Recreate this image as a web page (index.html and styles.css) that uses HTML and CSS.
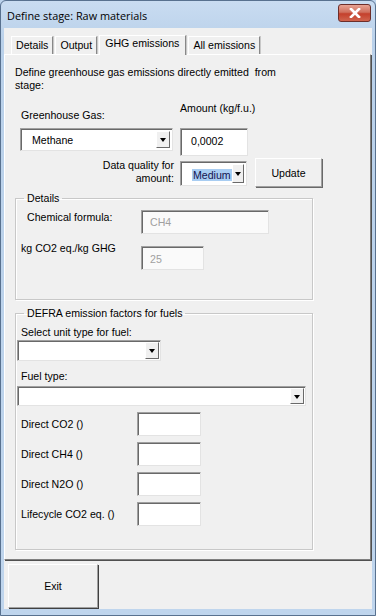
FILE: index.html
```html
<!DOCTYPE html>
<html lang="en">
<head>
  <meta charset="UTF-8">
  <title>Define stage: Raw materials</title>
  <link rel="stylesheet" href="styles.css">
</head>
<body>
  <div class="window">
    <div class="titlebar">
      <span class="title">Define stage: Raw materials</span>
      <button class="close-btn" aria-label="Close">
        <svg width="14" height="10" viewBox="0 0 14 10">
          <path d="M3 1 L11 9 M11 1 L3 9" stroke="#fff" stroke-width="2.6" stroke-linecap="square"/>
        </svg>
      </button>
    </div>

    <div class="client">
      <div class="tabs">
        <div class="tab">Details</div>
        <div class="tab">Output</div>
        <div class="tab active">GHG emissions</div>
        <div class="tab">All emissions</div>
      </div>

      <div class="tab-page">
        <p class="intro">Define greenhouse gas emissions directly emitted &nbsp;from<br>stage:</p>

        <div class="ghg-grid">
          <label class="lbl lbl-gas">Greenhouse Gas:</label>
          <label class="lbl lbl-amount">Amount (kg/f.u.)</label>
          <span></span>

          <div class="combo combo-gas">
            <span class="combo-text">Methane</span>
            <span class="drop-btn"></span>
          </div>
          <div class="textbox amount-box">0,0002</div>
          <span></span>

          <label class="lbl lbl-quality">Data quality for<br>amount:</label>
          <div class="combo combo-quality">
            <span class="combo-text"><span class="selected">Medium</span></span>
            <span class="drop-btn"></span>
          </div>
          <button class="btn btn-update">Update</button>
        </div>

        <fieldset class="group group-details">
          <legend>Details</legend>
          <div class="details-grid">
            <span class="lbl formula-lbl">Chemical formula:</span>
            <div class="textbox disabled formula-box">CH4</div>
            <span class="lbl gwp-lbl">kg CO2 eq./kg GHG</span>
            <div class="textbox disabled gwp-box">25</div>
          </div>
        </fieldset>

        <fieldset class="group group-defra">
          <legend>DEFRA emission factors for fuels</legend>
          <div class="lbl defra-lbl">Select unit type for fuel:</div>
          <div class="combo combo-unit">
            <span class="combo-text"></span>
            <span class="drop-btn"></span>
          </div>
          <div class="lbl defra-lbl fuel-lbl">Fuel type:</div>
          <div class="combo combo-fuel">
            <span class="combo-text"></span>
            <span class="drop-btn"></span>
          </div>

          <div class="factor-grid">
            <span class="lbl">Direct CO2 ()</span>
            <div class="textbox factor-box"></div>
            <span class="lbl">Direct CH4 ()</span>
            <div class="textbox factor-box"></div>
            <span class="lbl">Direct N2O ()</span>
            <div class="textbox factor-box"></div>
            <span class="lbl">Lifecycle CO2 eq. ()</span>
            <div class="textbox factor-box"></div>
          </div>
        </fieldset>
      </div>

      <div class="footer">
        <button class="btn btn-exit">Exit</button>
      </div>
    </div>
  </div>
</body>
</html>
```

FILE: styles.css
```css
body {
  margin: 0;
  padding: 0;
  background: #bcd3ec;
  font-family: "Liberation Sans", Arial, sans-serif;
  font-size: 10.6px;
  color: #000;
}
.window {
  width: 374px;
  height: 614px;
  border: 1px solid #58718f;
  border-radius: 6px 6px 0 0;
  background: linear-gradient(#c9dcf1, #bad1ea 40px, #bfd5ed);
  display: flex;
  flex-direction: column;
}
.titlebar {
  height: 27px;
  display: flex;
  align-items: center;
  justify-content: space-between;
  padding: 0 4px 0 6px;
}
.title {
  font-family: "Open Sans", "Liberation Sans", sans-serif;
  font-size: 10.9px;
  color: #000;
  margin-top: 1px;
}
.close-btn {
  width: 33px;
  height: 18px;
  margin-top: -4px;
  border: 1px solid #6d2e2a;
  border-radius: 3px;
  background: linear-gradient(#e8a393, #d0705e 45%, #c4402c 55%, #d0644e);
  display: flex;
  align-items: center;
  justify-content: center;
  padding: 0;
}
.client {
  flex: 1;
  margin: 0 3px 6px 3px;
  background: #f0f0f0;
  display: flex;
  flex-direction: column;
}

/* Tabs */
.tabs {
  height: 26px;
  display: flex;
  align-items: flex-end;
  padding-left: 7px;
}
.tab {
  height: 16px;
  padding: 1px 4px 0 4px;
  border-left: 1px solid #fff;
  border-top: 1px solid #fff;
  border-right: 1px solid #888;
  box-shadow: 1px 0 0 #c8c8c8;
  margin-right: 2px;
  line-height: 15px;
  color: #000;
}
.tab.active {
  height: 19px;
  padding: 0 6px 0 5px;
  margin: 0 2px 0 0;
  line-height: 14px;
  background: #f0f0f0;
  position: relative;
  top: 1px;
}
.tab-page {
  height: 504px;
  border-top: 1px solid #fff;
  border-left: 1px solid #fff;
  border-right: 1px solid #808080;
  border-bottom: 1px solid #808080;
  box-shadow: 1px 1px 0 #505050;
  margin-right: 1px;
}
.intro {
  margin: 11px 0 0 10px;
  line-height: 13px;
}
.lbl {
  line-height: 13px;
  white-space: nowrap;
}

/* top section */
.ghg-grid {
  display: grid;
  grid-template-columns: 153px 68px 67px;
  grid-template-rows: 27px 28px 31px;
  column-gap: 7px;
  row-gap: 2px;
  margin: 7px 0 0 15px;
}
.lbl-gas {
  align-self: end;
  margin: 0 0 4px 1px;
}
.lbl-amount {
  align-self: end;
  margin-bottom: 11px;
}
.lbl-quality {
  text-align: right;
  padding-top: 1px;
  margin-right: -1px;
}
.textbox {
  background: #fff;
  border-top: 1px solid #a0a0a0;
  border-left: 1px solid #a0a0a0;
  border-right: 1px solid #e3e3e3;
  border-bottom: 1px solid #e3e3e3;
  box-shadow: inset 1px 1px 0 #696969;
  box-sizing: border-box;
  padding: 3px 0 0 8px;
  line-height: 13px;
}
.textbox.disabled {
  color: #a0a0a0;
  background: #fafafa;
}
.amount-box {
  padding: 6px 0 0 10px;
}
.combo {
  display: flex;
  background: #fff;
  border-top: 1px solid #a0a0a0;
  border-left: 1px solid #a0a0a0;
  border-right: 1px solid #e3e3e3;
  border-bottom: 1px solid #e3e3e3;
  box-shadow: inset 1px 1px 0 #696969;
  box-sizing: border-box;
  padding: 2px;
}
.combo-text {
  flex: 1;
  line-height: 13px;
}
.drop-btn {
  width: 14px;
  background: #f0f0f0;
  border-top: 1px solid #fff;
  border-left: 1px solid #fff;
  border-right: 1px solid #696969;
  border-bottom: 1px solid #696969;
  box-sizing: border-box;
  display: flex;
  align-items: center;
  justify-content: center;
}
.drop-btn::after {
  content: "";
  border-left: 3.5px solid transparent;
  border-right: 3.5px solid transparent;
  border-top: 4px solid #000;
  margin-top: 1px;
}
.combo-gas {
  height: 23px;
  width: 153px;
}
.combo-gas .combo-text {
  padding: 3px 0 0 9px;
}
.combo-quality {
  height: 25px;
  width: 67px;
  margin-top: 3px;
}
.combo-quality .combo-text {
  padding: 5px 0 0 9px;
}
.selected {
  background: #a8cdf2;
  color: #141450;
  padding: 0 1px;
}
.btn {
  font-family: inherit;
  font-size: 10.6px;
  background: #f0f0f0;
  border-top: 1px solid #fff;
  border-left: 1px solid #fff;
  border-right: 1px solid #a0a0a0;
  border-bottom: 1px solid #a0a0a0;
  box-shadow: 1px 1px 0 #696969;
  color: #000;
  padding: 0;
}
.btn-update {
  height: 29px;
  width: 67px;
}

/* group boxes */
.group {
  width: 298px;
  margin: 0 0 0 10px;
  border: 1px solid #c8c8c8;
  box-shadow: 1px 1px 0 #fff, inset 1px 1px 0 #fff;
  padding: 0;
  box-sizing: border-box;
}
.group legend {
  margin-left: 8px;
  padding: 0 3px;
  line-height: 13px;
}
.group-details {
  margin-top: 3px;
  height: 108px;
}
.details-grid {
  display: grid;
  grid-template-columns: 120px auto;
  grid-template-rows: 24px 24px;
  row-gap: 12px;
  margin: 5px 0 0 5px;
  align-items: start;
}
.formula-lbl {
  padding: 1px 0 0 6px;
}
.gwp-lbl {
  margin-top: -4px;
}
.formula-box {
  width: 128px;
  height: 24px;
  padding-top: 5px;
}
.gwp-box {
  width: 63px;
  height: 24px;
  padding-top: 6px;
}
.group-defra {
  margin-top: 7px;
  height: 243px;
}
.defra-lbl {
  margin: 6px 0 0 5px;
}
.fuel-lbl {
  margin-top: 9px;
}
.combo-unit {
  width: 144px;
  height: 21px;
  margin: 1px 0 0 1px;
  padding: 1px;
}
.combo-fuel {
  width: 289px;
  height: 20px;
  margin: 3px 0 0 1px;
  padding: 1px;
}
.factor-grid {
  display: grid;
  grid-template-columns: 116px 64px;
  grid-auto-rows: 24px;
  row-gap: 6px;
  margin: 6px 0 0 5px;
  align-items: center;
}
.factor-box {
  height: 24px;
}

/* footer */
.footer {
  flex: 1;
  display: flex;
  align-items: flex-end;
  padding: 0 0 1px 4px;
}
.btn-exit {
  width: 90px;
  height: 44px;
  box-shadow: 1px 1px 0 #404040;
}
```
